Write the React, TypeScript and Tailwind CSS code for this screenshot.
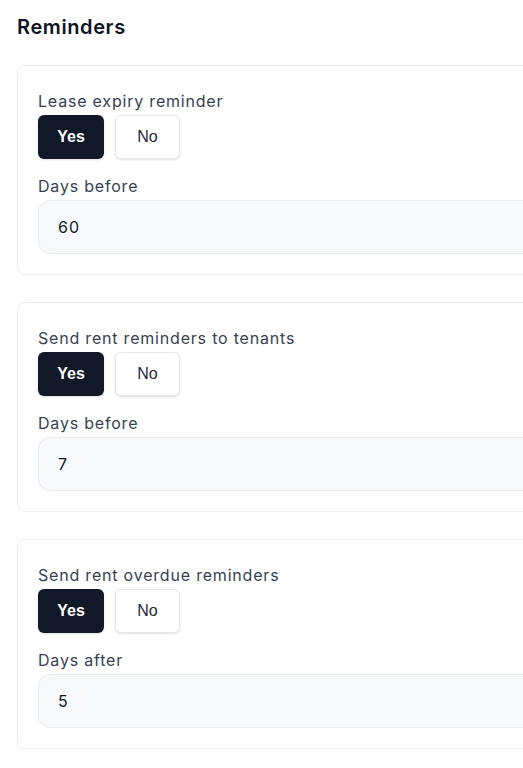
import React from "react";

const sections = [
  { label: "Lease expiry reminder", sub: "Days before", value: "60" },
  { label: "Send rent reminders to tenants", sub: "Days before", value: "7" },
  { label: "Send rent overdue reminders", sub: "Days after", value: "5" },
];

export default function App() {
  return (
    <div className="w-[523px] min-h-[768px] overflow-hidden bg-white font-['Inter',sans-serif]">
      <div className="w-[800px] pl-[17px] pt-[13px]">
        <h2 className="text-[20px] leading-[28px] font-semibold tracking-[0.03em] text-[#0f1422]">Reminders</h2>
        <div className="mt-[24px] flex flex-col gap-[27px]">
          {sections.map((s) => (
            <div
              key={s.label}
              className="rounded-[8px] border border-[#eef0f2] bg-white pt-[23px] px-[20px] pb-[20px]"
            >
              <div className="text-[16px] leading-[24px] tracking-[0.05em] text-[#374151]">{s.label}</div>
              <div className="mt-[2px] flex gap-[11px]">
                <button className="h-[44px] w-[66px] rounded-[6px] bg-[#111827] text-[16px] font-bold text-white font-['Liberation_Sans',sans-serif] shadow-sm">
                  Yes
                </button>
                <button className="h-[44px] w-[65px] rounded-[6px] border border-[#e5e7eb] bg-white text-[16px] text-[#1f2937] font-['Liberation_Sans',sans-serif] shadow-sm">
                  No
                </button>
              </div>
              <div className="mt-[15px] text-[16px] leading-[24px] tracking-[0.05em] text-[#374151]">{s.sub}</div>
              <div className="mt-[2px] flex h-[54px] w-[700px] items-center rounded-[12px] border border-[#e9ebee] bg-[#f8f9fb] pl-[19px] text-[16px] tracking-[0.06em] text-[#111827]">
                {s.value}
              </div>
            </div>
          ))}
        </div>
      </div>
    </div>
  );
}
